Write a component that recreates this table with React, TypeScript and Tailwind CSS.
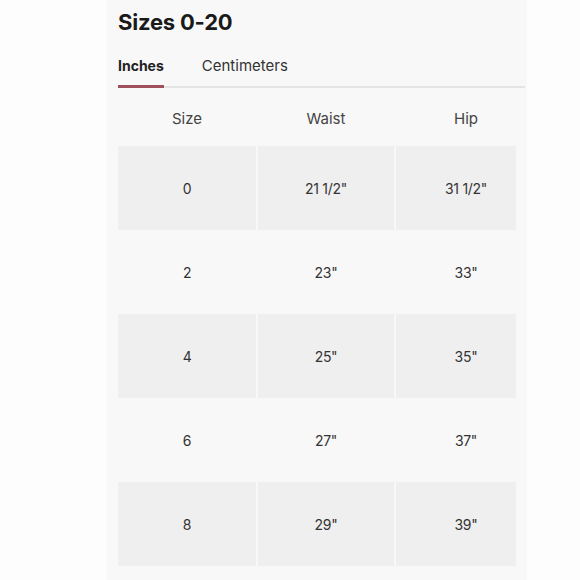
import React from "react";

const rows = [
  { size: "0", waist: '21 1/2"', hip: '31 1/2"' },
  { size: "2", waist: '23"', hip: '33"' },
  { size: "4", waist: '25"', hip: '35"' },
  { size: "6", waist: '27"', hip: '37"' },
  { size: "8", waist: '29"', hip: '39"' },
];

export default function App() {
  return (
    <div
      className="w-[580px] h-[580px] bg-[#fdfdfd] flex overflow-hidden"
      style={{ fontFamily: "Inter, 'Liberation Sans', sans-serif" }}
    >
      <div className="ml-[107px] w-[420px] h-full bg-[#f8f8f8] pl-[11px] pt-[8px]">
        <h1 className="text-[22px] leading-[28px] font-bold text-[#1a1a1a] tracking-[-0.2px]">
          Sizes 0-20
        </h1>
        <div className="mt-[20px] flex items-end border-b-2 border-[#e4e4e4] mr-[2px]">
          <div className="text-[14px] leading-[20px] font-bold text-[#222] pb-[9px] -mb-[2px] border-b-[3px] border-[#a04f5c]">
            Inches
          </div>
          <div className="ml-[38px] text-[15px] leading-[20px] text-[#333] pb-[10px]">
            Centimeters
          </div>
        </div>
        <div className="grid grid-cols-[138px_136px_120px] gap-x-[2px] h-[58px] pt-[5px] items-center text-[15px] text-[#444]">
          <div className="text-center">Size</div>
          <div className="text-center">Waist</div>
          <div className="text-center pl-[20px]">Hip</div>
        </div>
        <div className="flex flex-col">
          {rows.map((r, i) => {
            const bg = i % 2 === 0 ? "bg-[#efeff0]" : "bg-transparent";
            return (
              <div
                key={r.size}
                className="grid grid-cols-[138px_136px_120px] gap-x-[2px] h-[84px] text-[14px] text-[#333] tracking-[-0.3px]"
              >
                <div className={`${bg} flex items-center justify-center`}>{r.size}</div>
                <div className={`${bg} flex items-center justify-center`}>{r.waist}</div>
                <div className={`${bg} flex items-center justify-center pl-[20px]`}>{r.hip}</div>
              </div>
            );
          })}
        </div>
      </div>
    </div>
  );
}
